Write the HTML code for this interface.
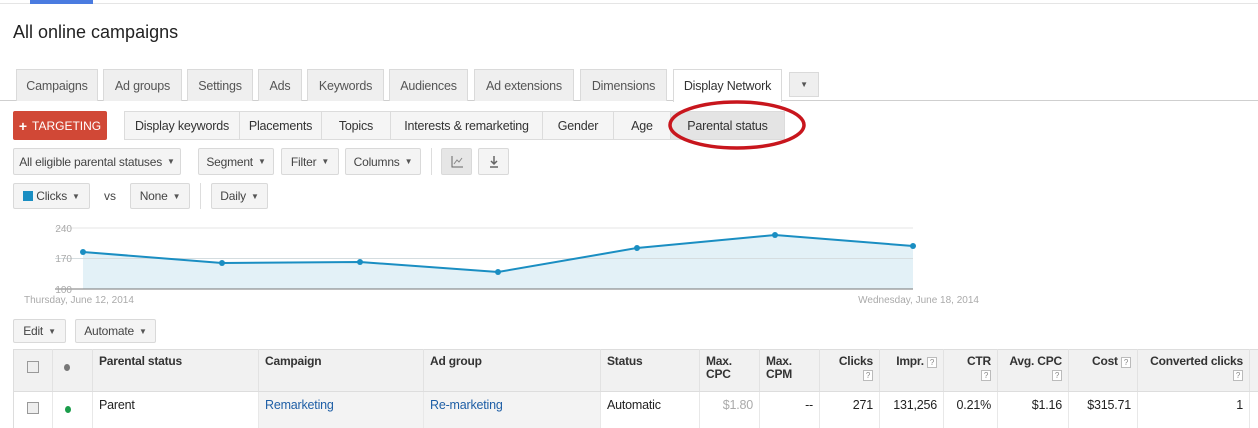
<!DOCTYPE html><html><head><meta charset="utf-8"><style>
*{box-sizing:border-box;margin:0;padding:0}
body{width:1258px;height:428px;overflow:hidden;background:#fff;font-family:"Liberation Sans",Arial,sans-serif;font-size:12px;color:#333;position:relative}
.a{position:absolute}
.b{position:absolute;background:#f4f4f4;border:1px solid #d9d9d9;border-radius:2px;color:#444;font-size:12px;display:flex;align-items:center;justify-content:center;letter-spacing:-.2px;white-space:nowrap}
.t{position:absolute;top:69px;height:32px;background:#efefef;border:1px solid #dadada;border-bottom:none;color:#555;font-size:12.5px;display:flex;align-items:center;justify-content:center;letter-spacing:-.2px;white-space:nowrap}
.s{position:absolute;top:111px;height:29px;background:#f5f5f5;border:1px solid #dcdcdc;border-left:none;color:#333;font-size:12.5px;display:flex;align-items:center;justify-content:center;letter-spacing:-.2px;white-space:nowrap}
.ar{font-size:8px;margin-left:5px;color:#555}
.th{position:absolute;top:349px;height:42px;border-right:1px solid #e2e2e2;padding:6px 6px;font-size:12px;font-weight:bold;color:#333;line-height:13px;letter-spacing:-.2px}
.td{position:absolute;top:392px;height:36px;border-right:1px solid #e8e8e8;padding:6px 6px;font-size:12.5px;color:#222;letter-spacing:-.2px}
.r{text-align:right}
.q{display:inline-block;width:10px;height:11px;border:1px solid #bbb;font-size:8px;line-height:9px;text-align:center;color:#888;font-weight:normal;background:#fff}
.cb{position:absolute;width:12px;height:12px;border:1px solid #999;background:#eee}
</style></head><body>
<div class="a" style="left:0;top:3px;width:1258px;height:1px;background:#e5e5e5"></div>
<div class="a" style="left:30px;top:0;width:63px;height:4px;background:#4a7be0"></div>
<div class="a" style="left:13px;top:22px;font-size:18px;color:#222">All online campaigns</div>
<div class="a" style="left:0;top:100px;width:1258px;height:1px;background:#cfcfcf"></div>
<div class="t" style="left:16px;width:82px">Campaigns</div>
<div class="t" style="left:103px;width:79px">Ad groups</div>
<div class="t" style="left:187px;width:66px">Settings</div>
<div class="t" style="left:258px;width:44px">Ads</div>
<div class="t" style="left:307px;width:77px">Keywords</div>
<div class="t" style="left:389px;width:79px">Audiences</div>
<div class="t" style="left:474px;width:100px">Ad extensions</div>
<div class="t" style="left:580px;width:87px">Dimensions</div>
<div class="t" style="left:673px;width:109px;background:#fff;height:33px;color:#333">Display Network</div>
<div class="t" style="left:789px;width:30px;top:72px;height:25px;border-bottom:1px solid #dadada;font-size:8px">▼</div>
<div class="a" style="left:13px;top:111px;width:94px;height:29px;background:#d14836;border-radius:2px;color:#fff;font-size:12px;display:flex;align-items:center;justify-content:center"><b style="font-size:14px;margin-right:5px">+</b>TARGETING</div>
<div class="s" style="left:124px;width:116px;border-left:1px solid #dcdcdc">Display keywords</div>
<div class="s" style="left:240px;width:82px">Placements</div>
<div class="s" style="left:322px;width:69px">Topics</div>
<div class="s" style="left:391px;width:152px">Interests &amp; remarketing</div>
<div class="s" style="left:543px;width:71px">Gender</div>
<div class="s" style="left:614px;width:57px">Age</div>
<div class="s" style="left:671px;width:114px;background:#e4e4e4">Parental status</div>
<svg class="a" style="left:665px;top:98px" width="145" height="55"><ellipse cx="72" cy="27" rx="67" ry="23" fill="none" stroke="#c8161d" stroke-width="3.5"/></svg>
<div class="b" style="left:13px;top:148px;width:168px;height:27px">All eligible parental statuses<span class="ar">▼</span></div>
<div class="b" style="left:198px;top:148px;width:76px;height:27px">Segment<span class="ar">▼</span></div>
<div class="b" style="left:281px;top:148px;width:58px;height:27px">Filter<span class="ar">▼</span></div>
<div class="b" style="left:345px;top:148px;width:76px;height:27px">Columns<span class="ar">▼</span></div>
<div class="a" style="left:431px;top:148px;width:1px;height:27px;background:#ddd"></div>
<div class="b" style="left:441px;top:148px;width:31px;height:27px;background:#e6e6e6"><svg width="14" height="14"><path d="M2 1v11h11" stroke="#666" fill="none"/><path d="M4 9l3-4 2 2 3-4" stroke="#888" fill="none"/></svg></div>
<div class="b" style="left:478px;top:148px;width:31px;height:27px"><svg width="12" height="14"><path d="M6 1v8M3 6l3 3 3-3M2 12h8" stroke="#666" fill="none" stroke-width="1.5"/></svg></div>
<div class="b" style="left:13px;top:183px;width:77px;height:26px"><span style="width:10px;height:10px;background:#1a8ec2;display:inline-block;margin-right:3px"></span>Clicks<span class="ar">▼</span></div>
<div class="a" style="left:104px;top:189px;color:#444">vs</div>
<div class="b" style="left:130px;top:183px;width:60px;height:26px">None<span class="ar">▼</span></div>
<div class="a" style="left:200px;top:183px;width:1px;height:26px;background:#ddd"></div>
<div class="b" style="left:211px;top:183px;width:57px;height:26px">Daily<span class="ar">▼</span></div>
<svg class="a" style="left:0;top:215px" width="1000" height="95" font-family="Liberation Sans" font-size="10" fill="#aaa">
<line x1="55" y1="13" x2="913" y2="13" stroke="#e4e4e4"/>
<path d="M83 37L222 48L360 47L498 57L637 33L775 20L913 31V74H83Z" fill="#e3f1f7"/>
<line x1="55" y1="43.5" x2="913" y2="43.5" stroke="#d5dde0"/>
<line x1="55" y1="74" x2="913" y2="74" stroke="#777"/>
<path d="M83 37L222 48L360 47L498 57L637 33L775 20L913 31" fill="none" stroke="#1a8ec2" stroke-width="2"/>
<g fill="#1a8ec2"><circle cx="83" cy="37" r="3"/><circle cx="222" cy="48" r="3"/><circle cx="360" cy="47" r="3"/><circle cx="498" cy="57" r="3"/><circle cx="637" cy="33" r="3"/><circle cx="775" cy="20" r="3"/><circle cx="913" cy="31" r="3"/></g>
<text x="72" y="17" text-anchor="end">240</text><text x="72" y="47" text-anchor="end">170</text><text x="72" y="78" text-anchor="end">100</text>
<text x="24" y="88">Thursday, June 12, 2014</text><text x="979" y="88" text-anchor="end">Wednesday, June 18, 2014</text>
</svg>
<div class="b" style="left:13px;top:319px;width:53px;height:24px">Edit<span class="ar">▼</span></div>
<div class="b" style="left:75px;top:319px;width:81px;height:24px">Automate<span class="ar">▼</span></div>
<div class="a" style="left:13px;top:349px;width:1245px;height:43px;background:#f1f1f1;border-top:1px solid #ddd;border-bottom:1px solid #ddd"></div>
<div class="a" style="left:259px;top:392px;width:342px;height:36px;background:#f3f3f3"></div>
<div class="a" style="left:13px;top:349px;width:1px;height:79px;background:#ddd"></div>
<div class="th" style="left:13px;width:40px"></div><div class="cb" style="left:27px;top:361px"></div>
<div class="th" style="left:53px;width:40px"></div><div class="a" style="left:64px;top:364px;width:6px;height:7px;border-radius:50%;background:#777"></div>
<div class="th" style="left:93px;width:166px">Parental status</div>
<div class="th" style="left:259px;width:165px">Campaign</div>
<div class="th" style="left:424px;width:177px">Ad group</div>
<div class="th" style="left:601px;width:99px">Status</div>
<div class="th" style="left:700px;width:60px">Max.<br>CPC</div>
<div class="th" style="left:760px;width:60px">Max.<br>CPM</div>
<div class="th r" style="left:820px;width:60px">Clicks<br><span class="q">?</span></div>
<div class="th r" style="left:880px;width:64px">Impr. <span class="q">?</span></div>
<div class="th r" style="left:944px;width:54px">CTR<br><span class="q">?</span></div>
<div class="th r" style="left:998px;width:71px">Avg. CPC<br><span class="q">?</span></div>
<div class="th r" style="left:1069px;width:69px">Cost <span class="q">?</span></div>
<div class="th r" style="left:1138px;width:112px">Converted clicks<br><span class="q">?</span></div>
<div class="td" style="left:13px;width:40px"></div><div class="cb" style="left:27px;top:402px"></div>
<div class="td" style="left:53px;width:40px"></div><div class="a" style="left:65px;top:406px;width:6px;height:7px;border-radius:50%;background:#1a9c4a"></div>
<div class="td" style="left:93px;width:166px">Parent</div>
<div class="td" style="left:259px;width:165px;color:#1f5fa6">Remarketing</div>
<div class="td" style="left:424px;width:177px;color:#1f5fa6">Re-marketing</div>
<div class="td" style="left:601px;width:99px">Automatic</div>
<div class="td r" style="left:700px;width:60px;color:#aaa">$1.80</div>
<div class="td r" style="left:760px;width:60px">--</div>
<div class="td r" style="left:820px;width:60px">271</div>
<div class="td r" style="left:880px;width:64px">131,256</div>
<div class="td r" style="left:944px;width:54px">0.21%</div>
<div class="td r" style="left:998px;width:71px">$1.16</div>
<div class="td r" style="left:1069px;width:69px">$315.71</div>
<div class="td r" style="left:1138px;width:112px">1</div>
</body></html>
